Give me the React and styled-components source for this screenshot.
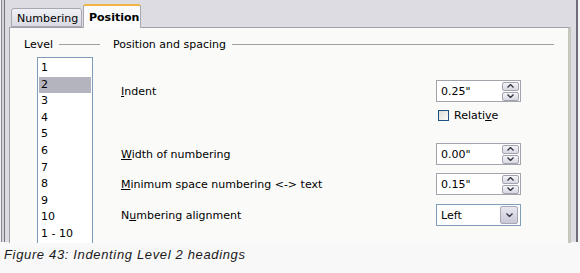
import React from "react";
import styled, { createGlobalStyle } from "styled-components";

const Global = createGlobalStyle`
  html, body { margin: 0; padding: 0; background: #f8f8f8; }
  body { font-family: "DejaVu Sans", Verdana, sans-serif; color: #000; }
`;

const Page = styled.div`
  width: 580px;
  height: 273px;
  display: flex;
  flex-direction: column;
  background: #f8f8f8;
`;

const Dialog = styled.div`
  height: 242px;
  width: 580px;
  box-sizing: border-box;
  background: #dcdce2;
  border-left: 1px solid #f0f0f4;
  box-shadow: inset 1px 0 0 #8a8a94, inset 3px 0 0 #d4d4da, inset 4px 0 0 #74747e, inset -2px 0 0 #f4f4f6, inset -4px 0 0 #6e6e78;
  display: flex;
  flex-direction: column;
  padding: 4px 9px 0 8px;
`;

const TabRow = styled.div`
  display: flex;
  align-items: flex-end;
  height: 23px;
  padding-left: 2px;
  position: relative;
  z-index: 1;
`;

const Tab = styled.div`
  box-sizing: border-box;
  height: ${p => (p.$active ? "24px" : "19px")};
  padding: 0 5px;
  font-size: 11px;
  font-weight: ${p => (p.$active ? "bold" : "normal")};
  display: flex;
  align-items: center;
  padding-top: ${p => (p.$active ? "1px" : "2px")};
  border: 1px solid #a8a8b0;
  border-bottom: ${p => (p.$active ? "none" : "1px solid #a8a8b0")};
  border-radius: 3px 3px 0 0;
  background: ${p => (p.$active ? "#fbfbfb" : "linear-gradient(#f0f0f6, #dadae4)")};
  border-top: ${p => (p.$active ? "2px solid #f0b440" : "1px solid #a8a8b0")};
  margin-bottom: ${p => (p.$active ? "-1px" : "0")};
  margin-left: ${p => (p.$active ? "1px" : "0")};
  width: ${p => p.$w}px;
`;

const Panel = styled.div`
  flex: 1;
  background: #fafaf8;
  border: 1px solid #a0a0a8;
  border-right: 3px solid #c6c6be;
  border-bottom: none;
  display: flex;
  padding: 10px 0 0 14px;
`;

const LevelCol = styled.div`
  width: 89px;
  display: flex;
  flex-direction: column;
`;

const GroupHead = styled.div`
  display: flex;
  align-items: center;
  font-size: 11px;
  height: 13px;
  white-space: nowrap;
`;

const Rule = styled.div`
  height: 1px;
  background: #a0a0a4;
  margin-left: 6px;
  width: ${p => (p.$w ? `${p.$w}px` : "auto")};
  flex: ${p => (p.$w ? "none" : "1")};
`;

const ListBox = styled.div`
  margin: 6px 0 0 13px;
  width: 54px;
  flex: 1;
  border: 1px solid #7f9db9;
  border-bottom: none;
  background: #fff;
  padding-top: 2px;
`;

const ListItem = styled.div`
  font-size: 11px;
  height: 16.6px;
  line-height: 16px;
  padding-left: 2px;
  margin: 0 1px;
  background: ${p => (p.$sel ? "#b4b4be" : "transparent")};
`;

const RightCol = styled.div`
  flex: 1;
  display: flex;
  flex-direction: column;
  padding-right: 14px;
`;

const Row = styled.div`
  display: flex;
  align-items: center;
  justify-content: space-between;
  height: 22px;
  margin-top: ${p => p.$mt}px;
  padding-left: 8px;
  padding-right: 33px;
  font-size: 11px;
`;

const U = styled.span`
  text-decoration: underline;
`;

const Field = styled.div`
  box-sizing: border-box;
  width: 85px;
  height: 22px;
  border: 1px solid ${p => (p.$blue ? "#7f9db9" : "#a4a4ac")};
  background: #fff;
  display: flex;
  align-items: center;
  justify-content: space-between;
  padding: 0 1px 0 4px;
  font-size: 11px;
`;

const Spin = styled.div`
  display: flex;
  flex-direction: column;
  gap: 1px;
`;

const SpinBtn = styled.div`
  width: 17px;
  height: 9px;
  box-sizing: border-box;
  border: 1px solid #a4a4b0;
  border-radius: 2px;
  background: linear-gradient(#f4f4f8, #d8d8e2);
  display: flex;
  align-items: center;
  justify-content: center;
`;

const DropBtn = styled.div`
  width: 18px;
  height: 18px;
  box-sizing: border-box;
  border: 1px solid #a8a8b8;
  border-radius: 2px;
  background: linear-gradient(#e8e8f0, #c8c8d6);
  display: flex;
  align-items: center;
  justify-content: center;
  margin-right: 1px;
`;

const CheckRow = styled.div`
  display: flex;
  align-items: center;
  gap: 5px;
  margin-top: 6px;
  margin-left: 325px;
  font-size: 11px;
  height: 15px;
`;

const Box = styled.div`
  width: 11px;
  height: 11px;
  box-sizing: border-box;
  border: 1px solid #1c5180;
  background: linear-gradient(135deg, #dcdcd6, #fafaf8);
`;

const Caption = styled.div`
  font-family: "Liberation Sans", Arial, sans-serif;
  font-style: italic;
  font-size: 13px;
  letter-spacing: 0.65px;
  color: #1a1a1a;
  padding: 5px 0 0 4px;
`;

const Arrow = ({ dir }) => (
  <svg width="7" height="4" viewBox="0 0 7 4">
    {dir === "up" ? (
      <path d="M0.5 3.5 L3.5 0.5 L6.5 3.5" fill="none" stroke="#303040" strokeWidth="1.3" />
    ) : (
      <path d="M0.5 0.5 L3.5 3.5 L6.5 0.5" fill="none" stroke="#303040" strokeWidth="1.3" />
    )}
  </svg>
);

const SpinField = ({ value }) => (
  <Field>
    <span>{value}</span>
    <Spin>
      <SpinBtn><Arrow dir="up" /></SpinBtn>
      <SpinBtn><Arrow dir="down" /></SpinBtn>
    </Spin>
  </Field>
);

const levels = ["1", "2", "3", "4", "5", "6", "7", "8", "9", "10", "1 - 10"];

export default function App() {
  return (
    <Page>
      <Global />
      <Dialog>
        <TabRow>
          <Tab $w={71}>Numbering</Tab>
          <Tab $active $w={58}>Position</Tab>
        </TabRow>
        <Panel>
          <LevelCol>
            <GroupHead>
              Level<Rule $w={41} />
            </GroupHead>
            <ListBox>
              {levels.map(l => (
                <ListItem key={l} $sel={l === "2"}>{l}</ListItem>
              ))}
            </ListBox>
          </LevelCol>
          <RightCol>
            <GroupHead>
              Position and spacing<Rule />
            </GroupHead>
            <Row $mt={29}>
              <span><U>I</U>ndent</span>
              <SpinField value={'0.25"'} />
            </Row>
            <CheckRow>
              <Box />
              <span>Relati<U>v</U>e</span>
            </CheckRow>
            <Row $mt={20}>
              <span><U>W</U>idth of numbering</span>
              <SpinField value={'0.00"'} />
            </Row>
            <Row $mt={8}>
              <span><U>M</U>inimum space numbering &lt;-&gt; text</span>
              <SpinField value={'0.15"'} />
            </Row>
            <Row $mt={9}>
              <span>N<U>u</U>mbering alignment</span>
              <Field $blue>
                <span>Left</span>
                <DropBtn><Arrow dir="down" /></DropBtn>
              </Field>
            </Row>
          </RightCol>
        </Panel>
      </Dialog>
      <Caption>Figure 43: Indenting Level 2 headings</Caption>
    </Page>
  );
}
